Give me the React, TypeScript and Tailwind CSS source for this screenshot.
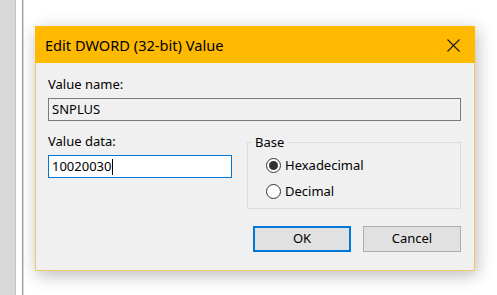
import React from "react";

const font = { fontFamily: '"Noto Sans", "Open Sans", sans-serif' };

function Radio({ checked, label }: { checked?: boolean; label: string }) {
  return (
    <div className="flex items-center h-[26px]">
      <div className="w-[15px] h-[15px] rounded-full border border-[#333333] bg-white flex items-center justify-center">
        {checked ? <div className="w-[9px] h-[9px] rounded-full bg-[#333333]" /> : null}
      </div>
      <span className="ml-[4px] text-[13px] leading-[18px] text-black">{label}</span>
    </div>
  );
}

export default function App() {
  return (
    <div className="relative w-[497px] h-[295px] bg-white overflow-hidden" style={font}>
      <div className="flex h-full">
        <div className="w-[15px] h-full bg-[#d9d9d9]" />
        <div className="w-[1px] h-full bg-[#c4c4c4]" />
        <div className="w-[6px] h-full bg-white" />
        <div className="w-[1px] h-full bg-[#a0a0a0]" />
        <div className="w-[1px] h-full bg-[#d8d8d8]" />
        <div className="flex-1 h-full bg-white" />
      </div>

      <div className="absolute left-[35px] top-[26px] w-[440px] h-[245px] flex flex-col border border-[#f1c865] bg-[#f0f0f0] shadow-[2px_4px_16px_rgba(0,0,0,0.28)]">
        <div className="h-[37px] -mt-px -mx-px bg-[#ffb900] flex items-center justify-between pl-[10px] pr-[15px]">
          <span className="text-[14.6px] text-black leading-none mt-[1px]">Edit DWORD (32-bit) Value</span>
          <svg width="13" height="13" viewBox="0 0 13 13" className="mt-[1px]">
            <path d="M0.5 0.5 L12.5 12.5 M12.5 0.5 L0.5 12.5" stroke="#1a1a1a" strokeWidth="1.1" />
          </svg>
        </div>

        <div className="flex flex-col pl-[12px] pr-[13px]">
          <div className="mt-[12px] text-[13px] leading-[18px] text-black">Value name:</div>
          <div className="mt-[5px] h-[23px] w-[413px] border border-[#7a7a7a] bg-[#f0f0f0] flex items-center pl-[3px] text-[13px] text-black">
            SNPLUS
          </div>

          <div className="mt-[11px] flex">
            <div className="flex flex-col w-[184px]">
              <div className="text-[13px] leading-[18px] text-black">Value data:</div>
              <div className="mt-[5px] h-[23px] w-[184px] border border-[#0078d7] bg-white flex items-center pl-[3px] text-[13px] text-black">
                <span>10020030</span>
                <span className="w-[1px] h-[16px] bg-black" />
              </div>
            </div>

            <fieldset className="ml-[15px] mt-[1px] w-[215px] h-[76px] border border-[#dcdcdc] p-0">
              <legend className="ml-[4px] px-[3px] text-[13px] leading-[18px] text-black">Base</legend>
              <div className="pl-[18px] pt-[1px]">
                <Radio checked label="Hexadecimal" />
                <Radio label="Decimal" />
              </div>
            </fieldset>
          </div>

          <div className="mt-[17px] flex justify-end gap-[12px]">
            <button className="w-[98px] h-[26px] border-2 border-[#0078d7] bg-[#e1e1e1] text-[13px] text-black flex items-center justify-center">
              OK
            </button>
            <button className="w-[98px] h-[26px] border border-[#adadad] bg-[#e1e1e1] text-[13px] text-black flex items-center justify-center">
              Cancel
            </button>
          </div>
        </div>
      </div>
    </div>
  );
}
